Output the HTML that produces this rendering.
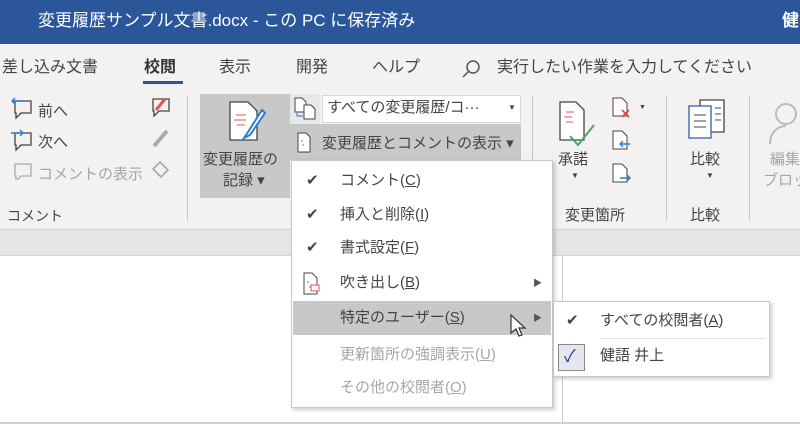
<!DOCTYPE html>
<html><head><meta charset="utf-8"><style>
*{margin:0;padding:0;box-sizing:border-box}
body{width:800px;height:424px;overflow:hidden;position:relative;background:#fff;font-family:"Liberation Sans","Noto Sans CJK JP",sans-serif;color:#444}
.a{position:absolute;white-space:nowrap}
.t{font-size:15px;line-height:20px}
.g{color:#a6a6a6}
svg{position:absolute}
u{text-decoration:underline}
</style></head><body>
<div class="a" style="left:0;top:0;width:800px;height:44px;background:#2b579a"></div>
<div class="a" style="left:38px;top:10px;color:#fff;font-size:17px;line-height:22px">変更履歴サンプル文書.docx - この PC に保存済み</div>
<div class="a" style="left:782px;top:10px;color:#fff;font-size:17px;font-weight:bold;line-height:22px">健</div>
<div class="a" style="left:0;top:44px;width:800px;height:185px;background:#f3f2f1"></div>
<div class="a t" style="left:2px;top:58px;font-size:16px;color:#444">差し込み文書</div>
<div class="a t" style="left:144px;top:58px;font-size:16px;font-weight:bold;color:#333">校閲</div>
<div class="a" style="left:143px;top:81px;width:40px;height:3px;background:#2b579a"></div>
<div class="a t" style="left:219px;top:58px;font-size:16px">表示</div>
<div class="a t" style="left:296px;top:58px;font-size:16px">開発</div>
<div class="a t" style="left:372px;top:58px;font-size:16px">ヘルプ</div>
<svg style="left:460px;top:58px" width="22" height="22"><circle cx="13" cy="9" r="6" fill="none" stroke="#555" stroke-width="1.5"/><line x1="9" y1="13" x2="3" y2="19" stroke="#555" stroke-width="1.5"/></svg>
<div class="a t" style="left:497px;top:58px;font-size:16px">実行したい作業を入力してください</div>
<svg style="left:10px;top:96px" width="26" height="84"><path d="M5 5h16v12H11l-5 5v-5H5z" fill="none" stroke="#444" stroke-width="1.3"/><path d="M14 5H2m3-3L2 5l3 3" fill="none" stroke="#2e7bcf" stroke-width="1.4"/><path d="M5 37h16v12H11l-5 5v-5H5z" fill="none" stroke="#444" stroke-width="1.3"/><path d="M1 37h12m-3-3l3 3-3 3" fill="none" stroke="#2e7bcf" stroke-width="1.4"/><path d="M5 68h16v12H11l-5 5v-5H5z" fill="none" stroke="#aaa" stroke-width="1.3"/></svg>
<div class="a t" style="left:38px;top:102px">前へ</div>
<div class="a t" style="left:38px;top:133px">次へ</div>
<div class="a t g" style="left:38px;top:165px">コメントの表示</div>
<svg style="left:147px;top:95px" width="28" height="92"><path d="M6 4h16v12H12l-5 5v-5H6z" fill="none" stroke="#444" stroke-width="1.3"/><path d="M9 15l9-11" stroke="#e05555" stroke-width="3"/><path d="M20 36l-13 15" stroke="#aaa" stroke-width="4"/><path d="M13 67l8 8-7 7-8-8z" fill="none" stroke="#aaa" stroke-width="1.6"/></svg>
<div class="a t" style="left:7px;top:206px;font-size:14px">コメント</div>
<div class="a" style="left:187px;top:96px;width:1px;height:125px;background:#c8c8c8"></div>
<div class="a" style="left:200px;top:94px;width:90px;height:104px;background:#c8c8c8"></div>
<svg style="left:226px;top:100px" width="44" height="48"><path d="M4 2h18l9 9v29H4z" fill="#fff" stroke="#444" stroke-width="1.3"/><path d="M10 15h10M8 20h12M11 25h8" stroke="#e05555"/><path d="M36 10l-14 22-4 6 6-3 15-22z" fill="#fff" stroke="#2e7bcf" stroke-width="2"/></svg>
<div class="a t" style="left:203px;top:150px">変更履歴の</div>
<div class="a t" style="left:223px;top:171px">記録 ▾</div>
<div class="a" style="left:290px;top:94px;width:30px;height:30px;background:#e8e8e8"></div>
<svg style="left:292px;top:97px" width="28" height="24"><path d="M3 1h7l4 4v10H3z" fill="#fff" stroke="#444"/><path d="M12 8h7l4 4v10H12z" fill="#fff" stroke="#444"/><path d="M5 16v3h6" fill="none" stroke="#2e7bcf"/></svg>
<div class="a" style="left:322px;top:95px;width:199px;height:28px;background:#fff;border:1px solid #d6d6d6"></div>
<div class="a t" style="left:327px;top:98px">すべての変更履歴/コ···</div>
<div class="a" style="left:508px;top:98px;font-size:8px;line-height:20px">▼</div>
<div class="a" style="left:290px;top:124px;width:231px;height:36px;background:#c8c8c8"></div>
<svg style="left:296px;top:132px" width="16" height="22"><path d="M2 1h8l4 4v15H2z" fill="#fff" stroke="#444"/><path d="M5 9h2M6 13h2" stroke="#e05555"/></svg>
<div class="a t" style="left:322px;top:134px">変更履歴とコメントの表示 ▾</div>
<div class="a" style="left:532px;top:96px;width:1px;height:125px;background:#c8c8c8"></div>
<svg style="left:556px;top:100px" width="46" height="48"><path d="M4 2h16l8 8v30H4z" fill="#fff" stroke="#444" stroke-width="1.3"/><path d="M10 12h8M8 17h8M10 22h7" stroke="#e05555"/><path d="M14 36l8 9 16-20" fill="none" stroke="#4aa564" stroke-width="2"/></svg>
<div class="a t" style="left:558px;top:150px">承諾</div>
<div class="a" style="left:571px;top:171px;font-size:8px">▼</div>
<svg style="left:610px;top:96px" width="40" height="100"><path d="M3 2h9l5 5v13H3z" fill="#fff" stroke="#444"/><path d="M12 14l7 7m0-7l-7 7" stroke="#e04040" stroke-width="1.6"/><path d="M3 35h9l5 5v13H3z" fill="#fff" stroke="#444"/><path d="M20 48h-10m3-3l-3 3 3 3" fill="none" stroke="#2e7bcf" stroke-width="1.4"/><path d="M3 68h9l5 5v13H3z" fill="#fff" stroke="#444"/><path d="M10 82h10m-3-3l3 3-3 3" fill="none" stroke="#2e7bcf" stroke-width="1.4"/><text x="29" y="13" font-size="7" fill="#444">▼</text></svg>
<div class="a t" style="left:565px;top:206px">変更箇所</div>
<div class="a" style="left:666px;top:96px;width:1px;height:125px;background:#c8c8c8"></div>
<svg style="left:686px;top:98px" width="46" height="46"><path d="M14 2h24v32H14z" fill="#fff" stroke="#444" stroke-width="1.3"/><path d="M3 8h22v32H3z" fill="#fff" stroke="#2e5ea8" stroke-width="1.3"/><path d="M8 17h12M8 23h12M8 29h12M29 10h6M29 16h6M29 22h6" stroke="#444"/></svg>
<div class="a t" style="left:690px;top:150px">比較</div>
<div class="a" style="left:706px;top:171px;font-size:8px">▼</div>
<div class="a t" style="left:690px;top:206px">比較</div>
<div class="a" style="left:749px;top:96px;width:1px;height:125px;background:#c8c8c8"></div>
<svg style="left:764px;top:100px" width="36" height="46"><circle cx="22" cy="14" r="10" fill="none" stroke="#bbb" stroke-width="2"/><path d="M6 44c0-12 8-18 16-18" fill="none" stroke="#bbb" stroke-width="2"/></svg>
<div class="a t g" style="left:770px;top:150px">編集</div>
<div class="a t g" style="left:763px;top:171px">ブロック</div>
<div class="a" style="left:0;top:229px;width:800px;height:27px;background:#e6e6e6;border-top:1px solid #d4d4d4;border-bottom:1px solid #d4d4d4"></div>
<div class="a" style="left:562px;top:256px;width:1px;height:168px;background:#ccc"></div>
<div class="a" style="left:0;top:422px;width:800px;height:2px;background:#d0d0d0"></div>
<div class="a" style="left:291px;top:160px;width:262px;height:248px;background:#fff;border:1px solid #c8c8c8;box-shadow:2px 2px 4px rgba(0,0,0,.2)"></div>
<div class="a" style="left:293px;top:301px;width:258px;height:34px;background:#c8c8c8"></div>
<div class="a t" style="left:306px;top:171px">✔</div>
<div class="a t" style="left:340px;top:171px">コメント(<u>C</u>)</div>
<div class="a t" style="left:306px;top:205px">✔</div>
<div class="a t" style="left:340px;top:205px">挿入と削除(<u>I</u>)</div>
<div class="a t" style="left:306px;top:238px">✔</div>
<div class="a t" style="left:340px;top:238px">書式設定(<u>F</u>)</div>
<svg style="left:302px;top:272px" width="20" height="24"><path d="M2 1h8l5 5v16H2z" fill="#fff" stroke="#444"/><path d="M5 10h2M7 15h3" stroke="#e05555"/><rect x="9" y="13" width="8" height="6" fill="#fff" stroke="#e05555"/></svg>
<div class="a t" style="left:340px;top:273px">吹き出し(<u>B</u>)</div>
<div class="a" style="left:533px;top:276px;font-size:9px;color:#555">▶</div>
<div class="a t" style="left:340px;top:308px">特定のユーザー(<u>S</u>)</div>
<div class="a" style="left:533px;top:311px;font-size:9px;color:#555">▶</div>
<svg style="left:509px;top:313px" width="18" height="26"><path d="M2 2v18l5-4 3 7 3-1-3-7h6z" fill="#fff" stroke="#333" stroke-width="1.2"/></svg>
<div class="a t g" style="left:340px;top:345px">更新箇所の強調表示(<u>U</u>)</div>
<div class="a t g" style="left:340px;top:378px">その他の校閲者(<u>O</u>)</div>
<div class="a" style="left:553px;top:301px;width:217px;height:76px;background:#fff;border:1px solid #c8c8c8;box-shadow:2px 2px 4px rgba(0,0,0,.2)"></div>
<div class="a t" style="left:566px;top:311px">✔</div>
<div class="a t" style="left:600px;top:311px">すべての校閲者(<u>A</u>)</div>
<div class="a" style="left:600px;top:338px;width:166px;height:1px;background:#e0e0e0"></div>
<div class="a" style="left:558px;top:344px;width:27px;height:27px;background:#e6e6ee;border:1px solid #888"></div>
<div class="a t" style="left:564px;top:347px;color:#223c8c;font-size:17px">✓</div>
<div class="a t" style="left:600px;top:346px">健語 井上</div>
</body></html>
